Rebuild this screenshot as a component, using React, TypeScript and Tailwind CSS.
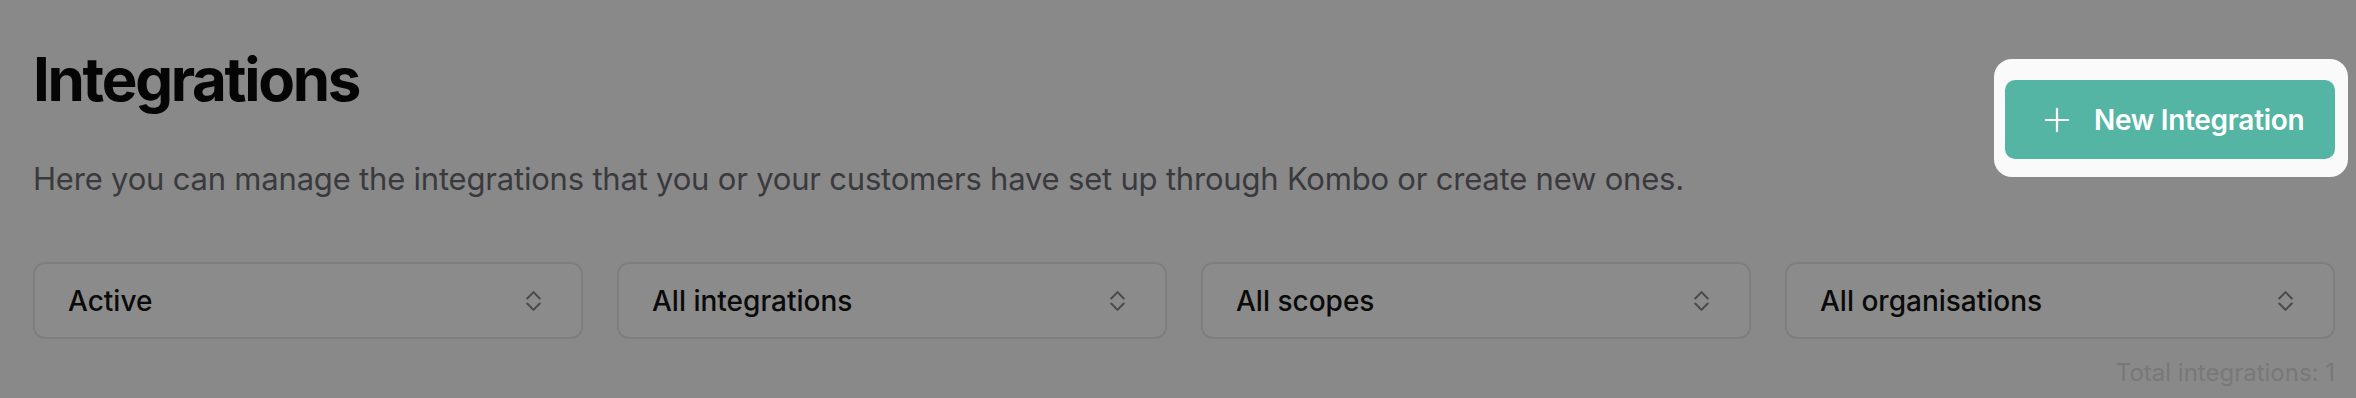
import { Plus } from 'lucide-react';

const filters = ['Active', 'All integrations', 'All scopes', 'All organisations'];

function UpDown() {
  return (
    <svg width="17" height="24" viewBox="0 0 16 23" fill="none" stroke="#4b4b4b" strokeWidth="2" strokeLinecap="round" strokeLinejoin="round">
      <path d="M2 9 8 3l6 6" />
      <path d="M2 14l6 6 6-6" />
    </svg>
  );
}

export default function App() {
  return (
    <div className="w-[2356px] h-[398px] bg-[#898989] pl-[33px] pr-[21px] pt-[49px] font-['Inter',sans-serif] overflow-hidden">
      <div className="flex justify-between items-start">
        <div>
          <h1 className="text-[60px] leading-none font-bold text-[#050505] tracking-[-2.3px]">Integrations</h1>
          <p className="mt-[54px] text-[31px] leading-none text-[#3a3a3e] tracking-[-0.2px]">
            Here you can manage the integrations that you or your customers have set up through Kombo or create new ones.
          </p>
        </div>
        <div className="relative mt-[31px]">
          <div className="absolute left-[-11px] right-[-13px] top-[-21px] bottom-[-18px] rounded-[18px] bg-[#fafafa]" />
          <button className="relative flex items-center gap-[18px] w-[330px] h-[79px] rounded-[10px] bg-[#55b5a5] pl-[33px] text-white text-[28px] font-semibold tracking-[-0.3px]">
            <Plus size={38} strokeWidth={1.4} />
            New Integration
          </button>
        </div>
      </div>

      <div className="mt-[68px] grid grid-cols-4 gap-[34px]">
        {filters.map((f) => (
          <div
            key={f}
            className="flex items-center justify-between h-[77px] rounded-[12px] border-2 border-[#7e7e7e] bg-[#8b8b8b] pl-[33px] pr-[39px]"
          >
            <span className="text-[28px] font-medium text-[#0a0a0a]">{f}</span>
            <UpDown />
          </div>
        ))}
      </div>

      <div className="mt-[22px] text-right text-[24px] leading-none text-[#787878]">Total integrations: 1</div>
    </div>
  );
}
